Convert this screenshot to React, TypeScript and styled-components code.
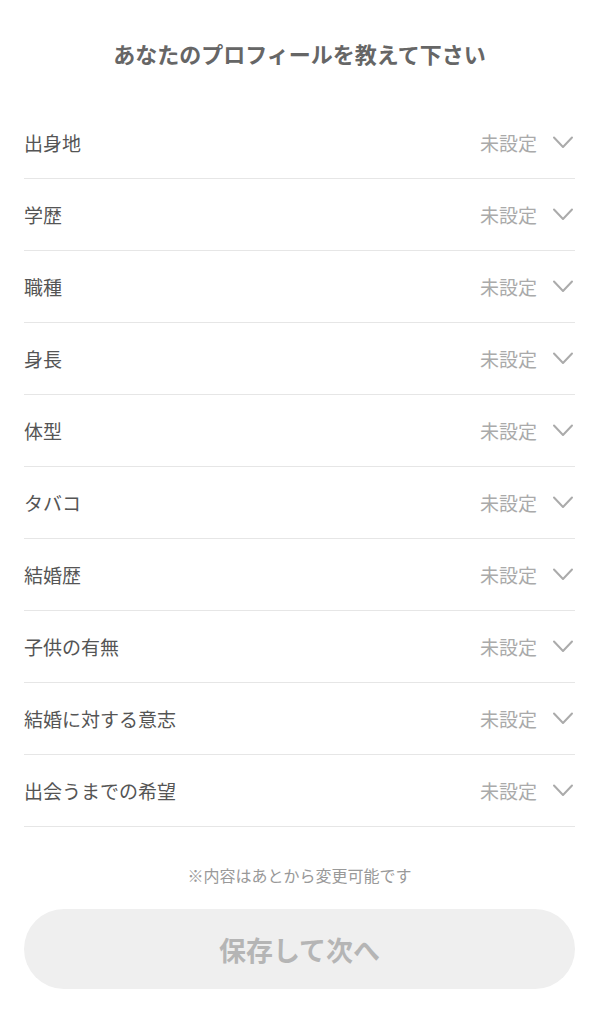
import React from "react";
import styled, {createGlobalStyle} from "styled-components";

const GlobalStyle = createGlobalStyle`
  body {
    margin: 0;
    background: #fff;
    font-family: "Noto Sans CJK JP", "Noto Sans", sans-serif;
  }
`

const items = [
    "出身地",
    "学歴",
    "職種",
    "身長",
    "体型",
    "タバコ",
    "結婚歴",
    "子供の有無",
    "結婚に対する意志",
    "出会うまでの希望",
]

const Chevron = () => (
    <svg width="22" height="15" viewBox="0 0 22 15" fill="none">
        <path d="M2 2.5 L11 12 L20 2.5" stroke="#ababab" strokeWidth="2" strokeLinecap="round" strokeLinejoin="round"/>
    </svg>
)

export default function App() {
    return (
        <>
            <GlobalStyle/>
            <Page>
                <Title>あなたのプロフィールを教えて下さい</Title>
                <List>
                    {items.map((label) => (
                        <Row key={label}>
                            <Label>{label}</Label>
                            <Value>
                                未設定
                                <Chevron/>
                            </Value>
                        </Row>
                    ))}
                </List>
                <Note>※内容はあとから変更可能です</Note>
                <SaveButton disabled>保存して次へ</SaveButton>
            </Page>
        </>
    )
}

const Page = styled.div`
  width: 599px;
  min-height: 1024px;
  box-sizing: border-box;
  padding: 0 24px;
  display: flex;
  flex-direction: column;
`
const Title = styled.h1`
  margin: 0;
  padding-top: 37px;
  height: 107px;
  box-sizing: border-box;
  text-align: center;
  font-size: 22px;
  line-height: 32px;
  font-weight: 700;
  color: #666;
`
const List = styled.div`
  display: flex;
  flex-direction: column;
`
const Row = styled.div`
  height: 72px;
  box-sizing: border-box;
  border-bottom: 1px solid #e6e6e6;
  display: flex;
  align-items: center;
  justify-content: space-between;
  padding-bottom: 1px;
`
const Label = styled.span`
  font-size: 19px;
  color: #555;
`
const Value = styled.span`
  display: flex;
  align-items: center;
  gap: 15px;
  font-size: 19px;
  color: #aaa;
  margin-right: 1px;
`
const Note = styled.p`
  margin: 37px 0 0;
  text-align: center;
  font-size: 16px;
  line-height: 22px;
  color: #999;
`
const SaveButton = styled.button`
  margin-top: 23px;
  width: 100%;
  height: 80px;
  border: none;
  border-radius: 40px;
  background: #efefef;
  color: #b5b5b5;
  font-family: inherit;
  font-size: 27px;
  font-weight: 700;
`
